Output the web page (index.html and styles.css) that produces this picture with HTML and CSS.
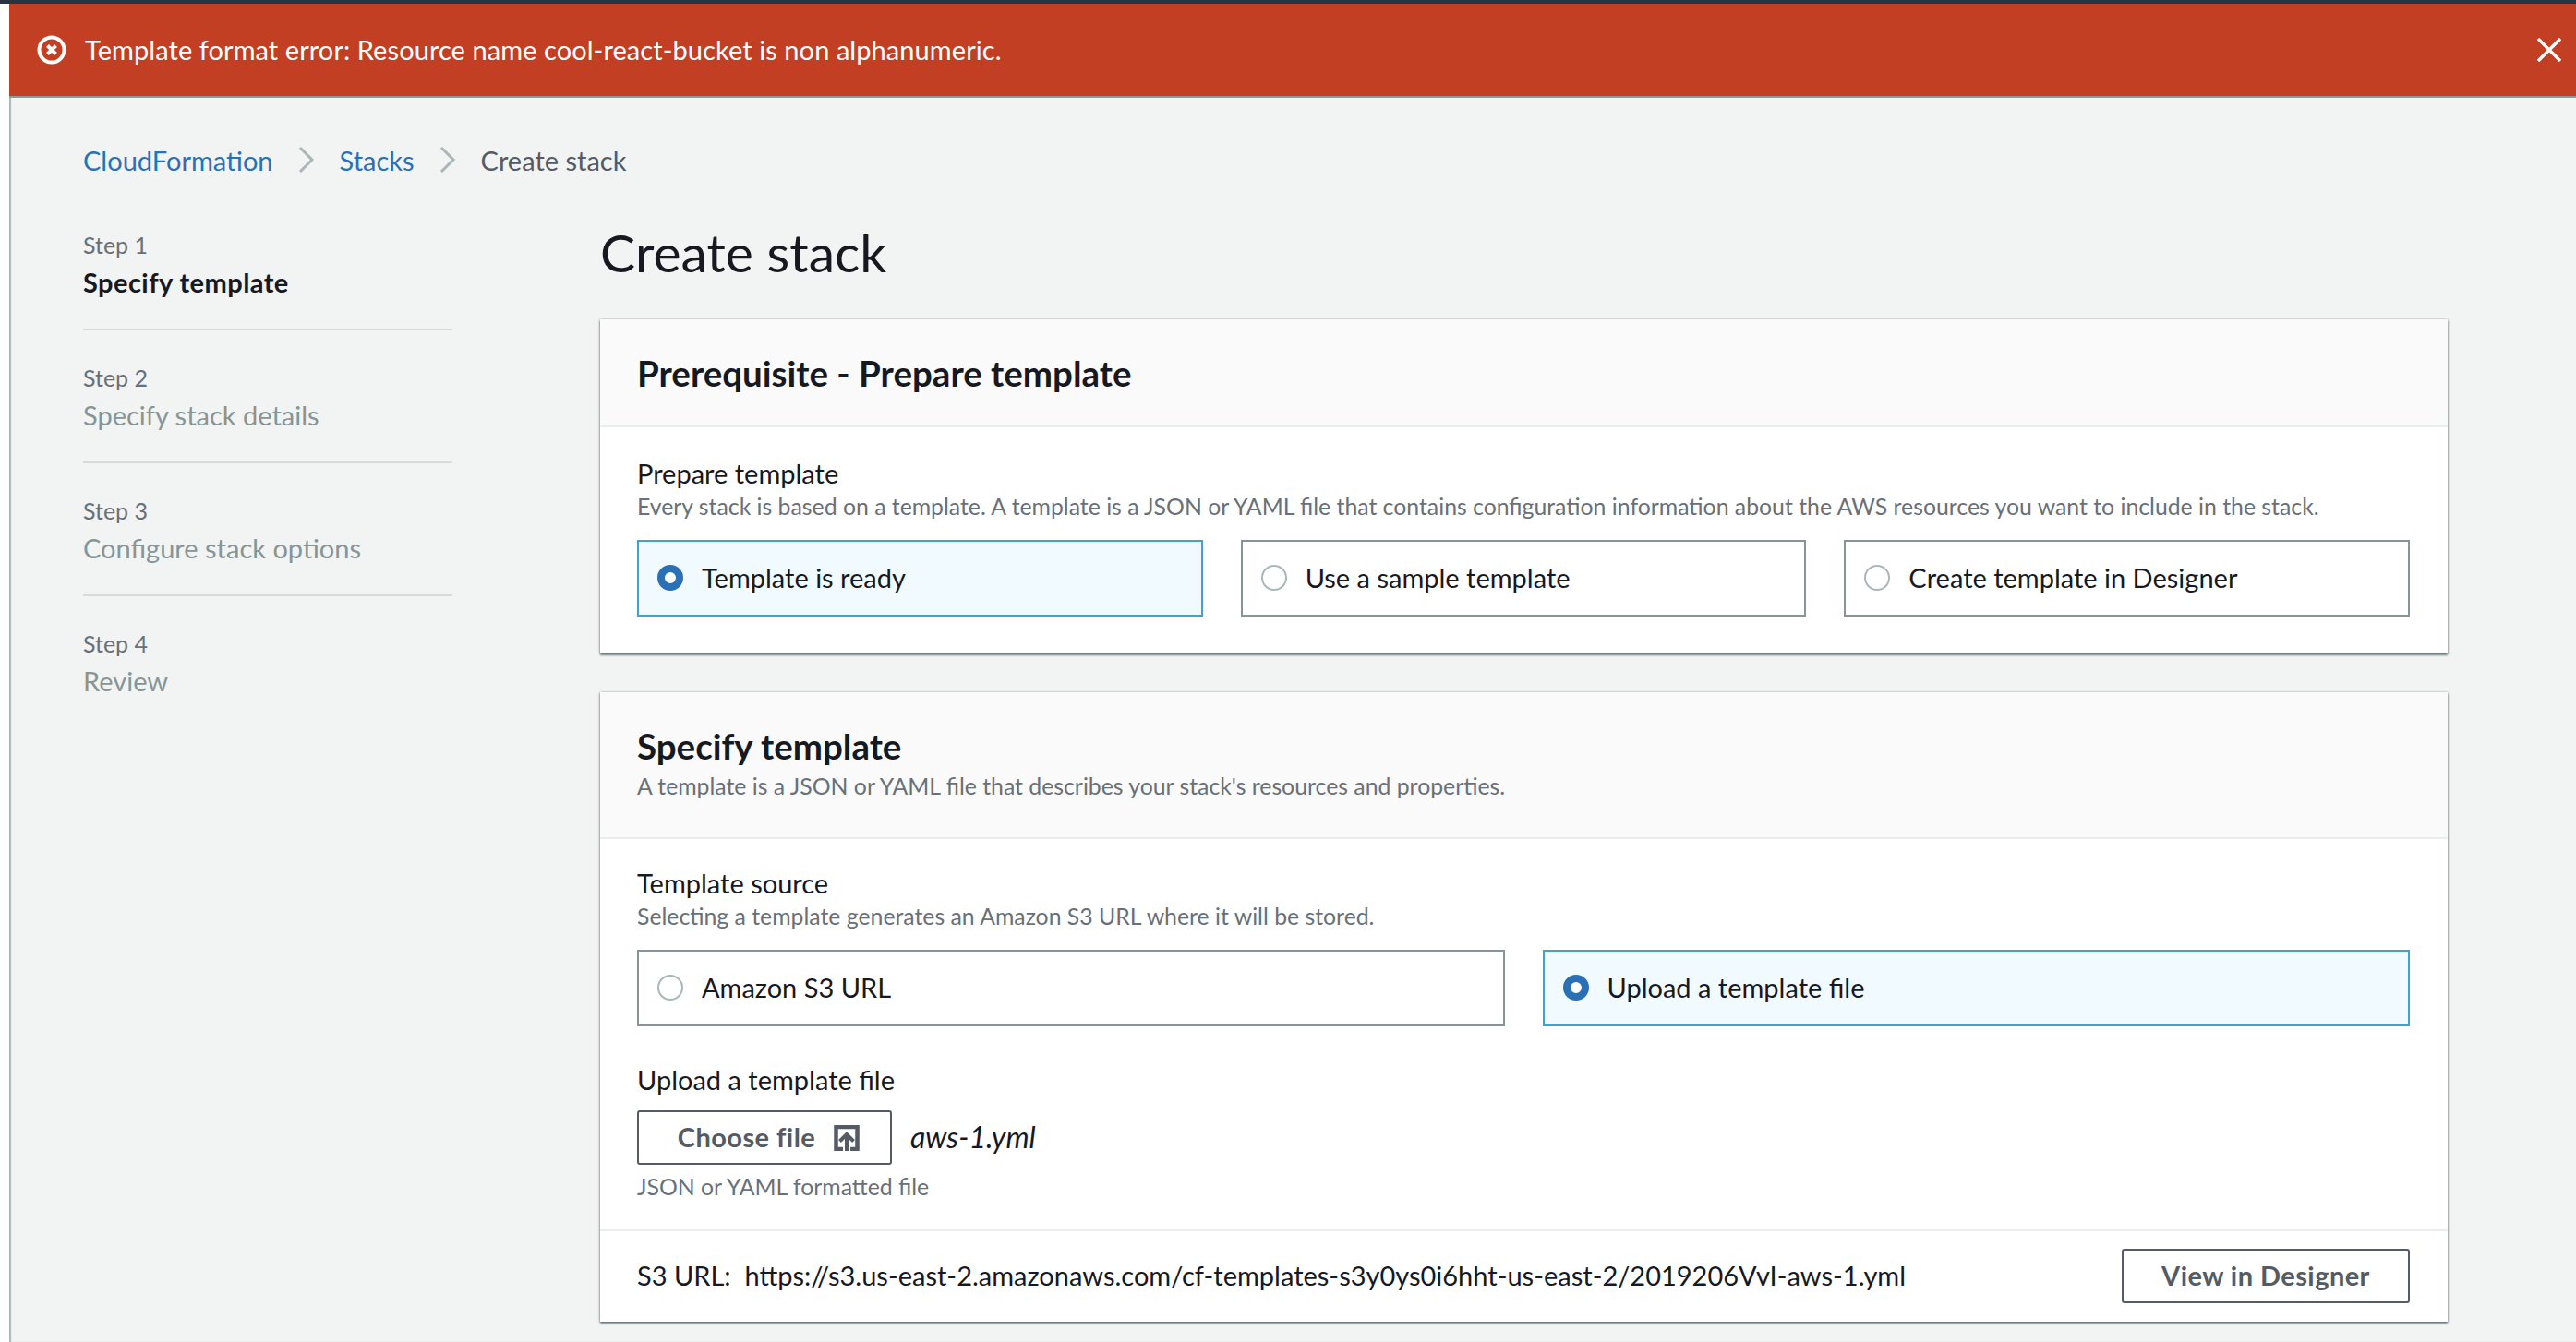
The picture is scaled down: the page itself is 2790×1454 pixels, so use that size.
FILE: index.html
```html
<!DOCTYPE html>
<html>
<head>
    <title>Create stack</title>
    <link rel="stylesheet" href="styles.css">
</head>
<body>
    <div class="page">
        <div class="banner">
            <svg class="banner-icon" viewBox="0 0 32 32">
                <circle cx="16" cy="16" r="13.5" fill="none" stroke="#fff" stroke-width="4"/>
                <path d="M11.5 11.5l9 9M20.5 11.5l-9 9" stroke="#fff" stroke-width="4" fill="none"/>
            </svg>
            <span class="banner-text">Template format error: Resource name cool-react-bucket is non alphanumeric.</span>
            <svg class="banner-close" viewBox="0 0 26 26">
                <path d="M1 1l24 24M25 1L1 25" stroke="#fff" stroke-width="3.4" fill="none"/>
            </svg>
        </div>

        <div class="breadcrumb">
            <a href="#">CloudFormation</a>
            <svg class="crumb-sep" viewBox="0 0 18 30"><path d="M2 2l13 13L2 28" stroke="#aab7b8" stroke-width="3" fill="none"/></svg>
            <a href="#">Stacks</a>
            <svg class="crumb-sep" viewBox="0 0 18 30"><path d="M2 2l13 13L2 28" stroke="#aab7b8" stroke-width="3" fill="none"/></svg>
            <span>Create stack</span>
        </div>

        <div class="layout">
            <!-- pasos -->
            <div class="steps">
                <div class="step">
                    <div class="step-num">Step 1</div>
                    <div class="step-name active">Specify template</div>
                </div>
                <div class="step">
                    <div class="step-num">Step 2</div>
                    <div class="step-name">Specify stack details</div>
                </div>
                <div class="step">
                    <div class="step-num">Step 3</div>
                    <div class="step-name">Configure stack options</div>
                </div>
                <div class="step">
                    <div class="step-num">Step 4</div>
                    <div class="step-name">Review</div>
                </div>
            </div>

            <div class="main">
                <h1>Create stack</h1>

                <div class="card">
                    <div class="card-head head-small">
                        <h2>Prerequisite - Prepare template</h2>
                    </div>
                    <div class="card-body body-first">
                        <div class="label">Prepare template</div>
                        <div class="desc">Every stack is based on a template. A template is a JSON or YAML file that contains configuration information about the AWS resources you want to include in the stack.</div>
                        <div class="options">
                            <div class="option selected"><span class="radio"></span>Template is ready</div>
                            <div class="option"><span class="radio"></span>Use a sample template</div>
                            <div class="option"><span class="radio"></span>Create template in Designer</div>
                        </div>
                    </div>
                </div>

                <div class="card">
                    <div class="card-head">
                        <h2>Specify template</h2>
                        <div class="desc">A template is a JSON or YAML file that describes your stack's resources and properties.</div>
                    </div>
                    <div class="card-body">
                        <div class="label">Template source</div>
                        <div class="desc">Selecting a template generates an Amazon S3 URL where it will be stored.</div>
                        <div class="options">
                            <div class="option"><span class="radio"></span>Amazon S3 URL</div>
                            <div class="option selected"><span class="radio"></span>Upload a template file</div>
                        </div>
                        <div class="label upload-label">Upload a template file</div>
                        <div class="upload-row">
                            <div class="btn btn-file">Choose file
                                <svg class="upload-icon" viewBox="0 0 28 28">
                                    <path d="M10 26H2.500V2h23v24H18" fill="none" stroke="#545b64" stroke-width="4.500"/>
                                    <path d="M14 28V11M6.500 17.500L14 10l7.500 7.500" fill="none" stroke="#545b64" stroke-width="4"/>
                                </svg>
                            </div>
                            <span class="file-name">aws-1.yml</span>
                        </div>
                        <div class="desc hint">JSON or YAML formatted file</div>
                    </div>
                    <div class="card-foot">
                        <span>S3 URL:&nbsp; https://s3.us-east-2.amazonaws.com/cf-templates-s3y0ys0i6hht-us-east-2/2019206VvI-aws-1.yml</span>
                        <div class="btn btn-designer">View in Designer</div>
                    </div>
                </div>
            </div>
        </div>
    </div>
</body>
</html>
```

FILE: styles.css
```css
html, body {
    margin: 0;
    padding: 0;
    height: 100%;
    overflow: hidden;
}

body {
    background-color: #fff;
    border-top: 4px solid #2a3340;
    box-sizing: border-box;
    font-family: Lato, "Liberation Sans", sans-serif;
    font-size: 29px;
    color: #16191f;
}

.page {
    margin-left: 10px;
    height: 100%;
    background-color: #f2f3f3;
    box-shadow: inset 2px 0 1px #aab7b8;
}

/* Banner de error */
.banner {
    height: 100px;
    background-color: #c23f23;
    border-bottom: 2px solid #8d9a9c;
    display: flex;
    align-items: center;
    padding-left: 30px;
    padding-right: 16px;
    color: #fff;
}

.banner-icon {
    width: 32px;
    height: 32px;
    margin-right: 20px;
}

.banner-text {
    flex: 1;
    letter-spacing: 0.07px;
    padding-bottom: 2px;
}

.banner-close {
    width: 26px;
    height: 26px;
}

/* Migas */
.breadcrumb {
    display: flex;
    align-items: center;
    padding: 47px 0 0 80px;
    height: 40px;
    color: #545b64;
}

.breadcrumb a {
    color: #2a70b5;
    text-decoration: none;
}

.crumb-sep {
    width: 18px;
    height: 30px;
    margin: 0 27px;
}

.layout {
    display: flex;
    padding-left: 80px;
}

/* Pasos */
.steps {
    width: 400px;
    margin-right: 160px;
    padding-top: 57px;
}

.step {
    padding-bottom: 32px;
}

.step + .step {
    border-top: 2px solid #d5dbdb;
    padding-top: 36px;
}

.step-num {
    font-size: 25px;
    line-height: 30px;
    color: #687078;
}

.step-name {
    line-height: 36px;
    margin-top: 8px;
    color: #879596;
}

.step-name.active {
    color: #16191f;
    font-weight: bold;
    letter-spacing: 0.44px;
}

/* Contenido */
.main {
    width: 2001px;
}

h1 {
    margin: 0;
    font-size: 57px;
    font-weight: 400;
    line-height: 70px;
    padding-top: 45px;
    padding-bottom: 38px;
}

.card {
    background-color: #fff;
    box-shadow: 0 2px 2px rgba(0, 28, 36, 0.5), 1px 0 2px rgba(0, 28, 36, 0.2), -1px 0 2px rgba(0, 28, 36, 0.2);
    margin-bottom: 42px;
}

.card-head {
    background-color: #fafafa;
    border-bottom: 2px solid #eaeded;
    padding: 36px 40px 0;
    height: 159px;
    box-sizing: border-box;
}

.head-small {
    height: 117px;
}

h2 {
    margin: 0;
    font-size: 38.5px;
    line-height: 44px;
    font-weight: bold;
}

.card-body {
    padding: 28px 41px 0 40px;
}

.body-first {
    padding-top: 30px;
    padding-bottom: 40px;
}

.label {
    line-height: 40px;
}

.desc {
    font-size: 24.8px;
    line-height: 32px;
    color: #687078;
}

.card-head .desc {
    margin-top: 6px;
}

.options {
    display: flex;
    gap: 41px;
    margin-top: 20px;
}

.option {
    flex: 1;
    height: 83px;
    box-sizing: border-box;
    border: 2px solid #879596;
    display: flex;
    align-items: center;
    padding-left: 20px;
    padding-bottom: 3px;
}

.option.selected {
    border-color: #44a1c9;
    background-color: #f1faff;
}

.radio {
    width: 28px;
    height: 28px;
    box-sizing: border-box;
    border: 2px solid #aab7b8;
    border-radius: 50%;
    margin-right: 20px;
    background-color: #fff;
    position: relative;
    top: 1px;
}

.selected .radio {
    border: 8px solid #2b6fb5;
}

.upload-label {
    margin-top: 38px;
}

.upload-row {
    display: flex;
    align-items: center;
    margin-top: 13px;
}

.btn {
    display: flex;
    align-items: center;
    justify-content: center;
    box-sizing: border-box;
    width: 276px;
    height: 59px;
    border: 2px solid #545b64;
    border-radius: 3px;
    font-weight: bold;
    letter-spacing: 0.44px;
    color: #545b64;
    background-color: #fff;
    padding-bottom: 2px;
}

.btn-file {
    padding-left: 9px;
}

.upload-icon {
    width: 28px;
    height: 28px;
    margin-left: 20px;
    margin-top: 3px;
}

.file-name {
    font-size: 32px;
    font-style: italic;
    margin-left: 20px;
    padding-bottom: 2px;
}

.hint {
    margin-top: 8px;
    padding-bottom: 30px;
}

.card-foot {
    border-top: 2px solid #eaeded;
    display: flex;
    align-items: center;
    justify-content: space-between;
    padding: 19px 41px 20px 40px;
}

.card-foot span {
    padding-bottom: 2px;
}

.btn-designer {
    width: 312px;
}
```
